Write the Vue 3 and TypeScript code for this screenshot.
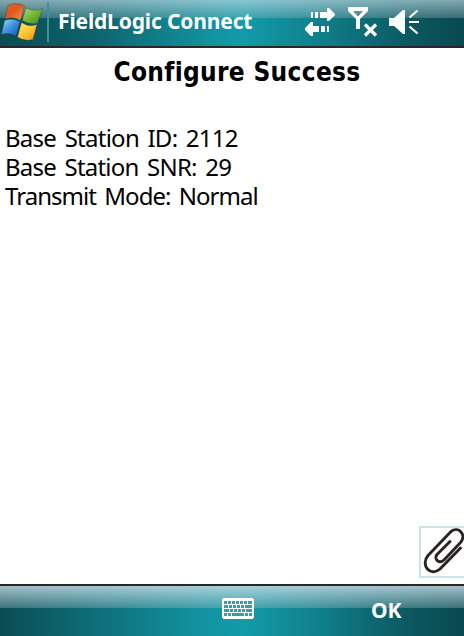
<script setup lang="ts">
const results: { label: string; value: string; cls: string }[] = [
  { label: 'Base Station ID', value: '2112', cls: 'id' },
  { label: 'Base Station SNR', value: '29', cls: 'snr' },
  { label: 'Transmit Mode', value: 'Normal', cls: 'mode' },
]

interface Key { x: number; y: number; w: number }
const keys: Key[] = [
  ...[2, 6, 10, 14, 18, 22].map((x) => ({ x, y: 3, w: 3 })),
  { x: 26, y: 3, w: 4 },
  ...[2, 7, 11, 15, 19].map((x) => ({ x, y: 7, w: x === 2 ? 4 : 3 })),
  { x: 23, y: 7, w: 7 },
  { x: 2, y: 11, w: 5 },
  ...[8, 12, 16, 20].map((x) => ({ x, y: 11, w: 3 })),
  { x: 24, y: 11, w: 6 },
  { x: 2, y: 15, w: 3 },
  { x: 6, y: 15, w: 3 },
  { x: 10, y: 15, w: 12 },
  { x: 23, y: 15, w: 3 },
  { x: 27, y: 15, w: 3 },
]
</script>

<template>
  <div class="screen">
    <header class="bar top">
      <svg class="logo" width="47" height="46" viewBox="0 0 47 46">
        <defs>
          <linearGradient id="red" x1="0" y1="0" x2="1" y2="1"><stop offset="0" stop-color="#e5632c" /><stop offset=".45" stop-color="#e2571f" /><stop offset="1" stop-color="#f79c55" /></linearGradient>
          <linearGradient id="green" x1="0" y1="0" x2="1" y2="1"><stop offset="0" stop-color="#b3d878" /><stop offset=".5" stop-color="#73b532" /><stop offset="1" stop-color="#3e8c20" /></linearGradient>
          <linearGradient id="blue" x1="0" y1="0" x2="1" y2="1"><stop offset="0" stop-color="#a5d8fa" /><stop offset=".5" stop-color="#3991df" /><stop offset="1" stop-color="#1554a8" /></linearGradient>
          <linearGradient id="gold" x1="0" y1="0" x2="1" y2="1"><stop offset="0" stop-color="#ffe777" /><stop offset=".55" stop-color="#ffc32b" /><stop offset="1" stop-color="#e98711" /></linearGradient>
        </defs>
        <g stroke="#173d43" stroke-opacity=".55" stroke-width=".7">
          <path fill="url(#red)" d="M8 5.500Q16 1.500 24.500 6L20.500 20.500Q13 16 5 19Z" />
          <path fill="url(#green)" d="M26 8Q34 12 42.500 8.500L37.500 23.500Q29.500 25 22.200 20.500Z" />
          <path fill="url(#blue)" d="M4.500 20.500Q12 17.500 20 21.500L16 36Q9 32 1.500 34.500Z" />
          <path fill="url(#gold)" d="M21.500 22.500Q29 27.500 37 24.500L33 39.500Q25 42 17.500 37Z" />
        </g>
      </svg>
      <i class="divider"></i>
      <h1>FieldLogic Connect</h1>
      <svg class="status" width="120" height="36" viewBox="300 4 120 36" fill="#fff">
        <path d="M311 12h2v6h-2zM315 12h3v6h-3zM320 12h7V8h2l6 6v1l-6 6h-2v-3h-7zM305 28l6-6h2v4h6v6h-6v4h-2l-6-6zM321 26h4v6h-4zM327 26h2v6h-2z" />
        <path fill-rule="evenodd" d="M348 7h20v4l-8 8v10h-4V19l-8-8zM353 11l4.500 5h1l4.500-5z" />
        <path d="M365 24.500l11 11M376 24.500l-11 11" fill="none" stroke="#fff" stroke-width="3.200" />
        <path d="M389 18h5l9-8h2v24h-2l-9-8h-5z" />
        <path d="M409.500 17.500l8-7M409 22h10M409.500 26.500l8 7" fill="none" stroke="#fff" stroke-width="2.200" />
      </svg>
    </header>

    <main>
      <h2>Configure Success</h2>
      <div class="results">
        <p v-for="r in results" :key="r.label" :class="r.cls">{{ r.label }}: {{ r.value }}</p>
      </div>
      <button class="attach" aria-label="Attachment">
        <svg width="43" height="48" viewBox="421 528 43 48" fill="none" stroke="#292321" stroke-width="2.900" stroke-linecap="round" stroke-linejoin="round">
          <path d="M450 541.500L437 554.500C433.500 559 439 564.500 444 560L460.500 542.500C467 535 458.500 525.500 451 531.500L428 555.500C420 565 430.500 577.500 440 569L460.500 548" />
        </svg>
      </button>
    </main>

    <footer class="bar bottom">
      <svg class="keyboard" width="32" height="21" viewBox="0 0 32 21" shape-rendering="crispEdges">
        <path fill="#fff" d="M1 0h30v1h1v19h-1v1H1v-1H0V1h1z" />
        <rect v-for="(k, i) in keys" :key="i" :x="k.x" :y="k.y" :width="k.w" height="3" fill="#329fab" />
      </svg>
      <button class="ok">OK</button>
    </footer>
  </div>
</template>

<style>
body { margin: 0; background: #fff; }
</style>

<style scoped>
.screen { width: 464px; height: 636px; display: flex; flex-direction: column; overflow: hidden; font-family: "Noto Sans", "DejaVu Sans", sans-serif; color: #000; }
h1, h2, p { margin: 0; white-space: nowrap; }
button { padding: 0; margin: 0; font: inherit; color: inherit; background: none; border: 0; }
.bar { box-sizing: border-box; display: flex; color: #fff; flex: none; }
.top {
  height: 48px; border-bottom: 2px solid #292727;
  background:
    linear-gradient(180deg, rgba(205,225,234,.62), rgba(150,180,188,.33)) 0 0 / 100% 18px no-repeat,
    linear-gradient(90deg, #0b4c53 0, #0d626b 90px, #12929f 210px, #129baa 242px, #10818c 315px, #0b5861 410px, #094950 464px);
}
.logo { flex: none; }
.divider { width: 2px; height: 40px; margin-top: 2px; background: #35929f; flex: none; }
h1 { width: 251px; padding-left: 9px; box-sizing: border-box; font-size: 21px; line-height: 42px; font-weight: 700; letter-spacing: -.15px; }
.status { margin-top: 4px; flex: none; }
main { flex: 1; display: flex; flex-direction: column; min-height: 0; }
h2 { text-align: center; font-family: "DejaVu Sans Condensed", "DejaVu Sans", sans-serif; font-stretch: condensed; font-size: 26px; line-height: 44px; padding: 2px 0 0 10px; font-weight: 700; letter-spacing: .3px; }
.results { padding: 29px 0 0 5px; font-size: 24px; line-height: 29px; word-spacing: 3px; }
.id { letter-spacing: -.74px; }
.snr { letter-spacing: -.77px; }
.mode { letter-spacing: -.96px; }
.attach { width: 45px; height: 52px; box-sizing: border-box; border: 2px solid #cae3e9; border-right: 0; align-self: flex-end; margin-top: auto; margin-bottom: 6px; overflow: hidden; display: flex; }
.attach svg { flex: none; }
.bottom {
  height: 52px; border-top: 2px solid #292727;
  background:
    linear-gradient(180deg, rgba(205,225,234,.78), rgba(150,180,188,.36)) 0 0 / 100% 22px no-repeat,
    linear-gradient(90deg, #0b4c53 0, #0d626b 60px, #12929f 200px, #129baa 242px, #10818c 315px, #0b5861 410px, #094950 464px);
}
.keyboard { margin: 12px 0 0 222px; flex: none; }
.ok { margin-left: 117px; height: 48px; font-size: 21px; line-height: 48px; font-weight: 700; }
</style>
